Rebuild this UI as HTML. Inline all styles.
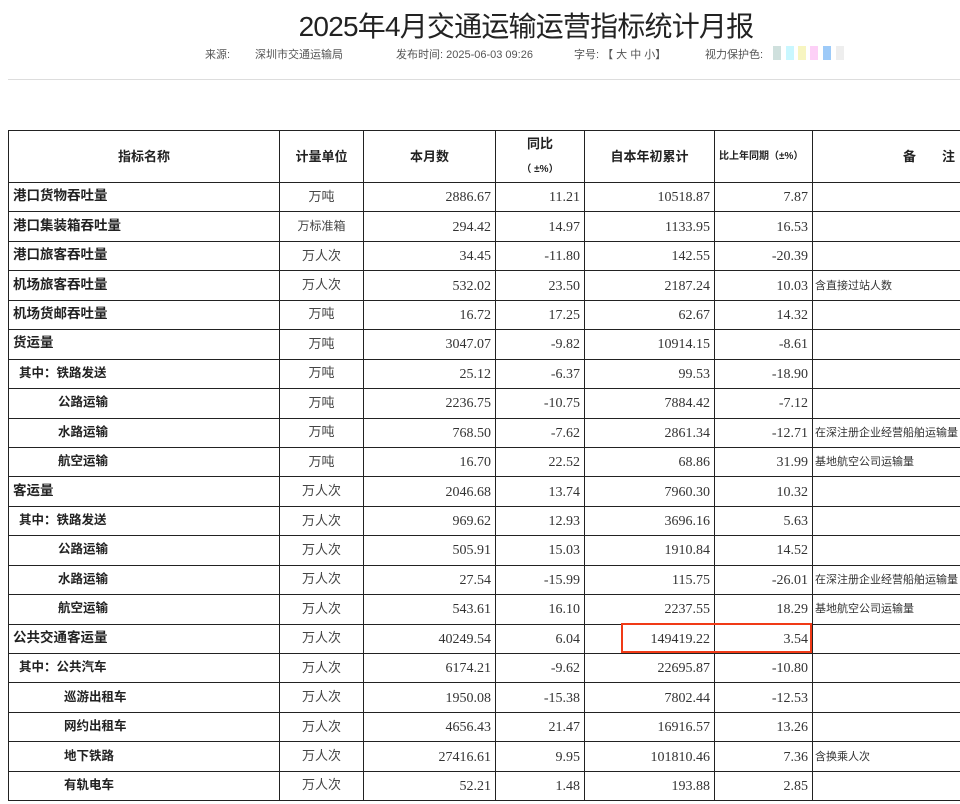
<!DOCTYPE html>
<html><head><meta charset="utf-8"><style>
body{margin:0;background:#fff;width:960px;height:804px;overflow:hidden;position:relative;font-family:"Liberation Sans","Noto Sans CJK SC",sans-serif;}
h1{position:absolute;top:5px;left:0;width:1052px;text-align:center;margin:0;font-weight:normal;font-size:28px;color:#222;letter-spacing:-0.8px;}
.meta{position:absolute;top:46px;font-size:11px;color:#555;white-space:nowrap}
.sw{position:absolute;top:46px;width:8px;height:14px}
.hr{position:absolute;top:79px;left:8px;width:952px;height:1px;background:#ddd}
table{position:absolute;left:8px;top:130px;border-collapse:collapse;table-layout:fixed;width:1000px}
td{border:1px solid #222;padding:0 4px;font-size:13px;color:#333;white-space:nowrap;overflow:hidden;vertical-align:middle;line-height:18px}
tr{height:29.45px}
tr.h{height:52px}
tr.h td{font-weight:bold;text-align:center;font-size:13px;color:#222}
td.n{font-weight:bold;color:#222;font-size:13.5px;padding-bottom:2px}
td.s1{padding-left:10px;font-size:12.5px}
td.s2{padding-left:49px;font-size:12.5px}
td.s3{padding-left:55px;font-size:12.5px}
td.u{text-align:center;color:#444;padding-bottom:1px}
td.v{text-align:right;font-family:"Liberation Serif",serif;font-size:14px;color:#333;padding-top:2px}
td.r{font-size:11px;color:#333;padding-left:2px}
.box{position:absolute;left:621px;top:623px;width:187px;height:26px;border:2px solid #f03a17}
</style></head><body>
<h1>2025年4月交通运输运营指标统计月报</h1>
<div class="meta" style="left:205px">来源:</div>
<div class="meta" style="left:255px">深圳市交通运输局</div>
<div class="meta" style="left:396px">发布时间: 2025-06-03 09:26</div>
<div class="meta" style="left:574px">字号: 【 大 中 小】</div>
<div class="meta" style="left:705px">视力保护色:</div>
<div class="sw" style="left:773px;background:#cfe0dd"></div>
<div class="sw" style="left:786px;background:#c9f7ff"></div>
<div class="sw" style="left:798px;background:#f7f5c0"></div>
<div class="sw" style="left:810px;background:#fdd0f7"></div>
<div class="sw" style="left:823px;background:#9dcaf8"></div>
<div class="sw" style="left:836px;background:#eee"></div>
<div class="hr"></div>
<table>
<colgroup><col style="width:271px"><col style="width:84px"><col style="width:132px"><col style="width:89px"><col style="width:130px"><col style="width:98px"><col style="width:196px"></colgroup>
<tr class="h"><td>指标名称</td><td>计量单位</td><td>本月数</td><td style="line-height:24px">同比<br><span style="font-size:10px">（ ±%）</span></td><td>自本年初累计</td><td style="font-size:10px;text-align:left">比上年同期（±%）</td><td style="text-align:left;padding-left:90px">备　　注</td></tr>
<tr><td class="n">港口货物吞吐量</td><td class="u">万吨</td><td class="v">2886.67</td><td class="v">11.21</td><td class="v">10518.87</td><td class="v">7.87</td><td class="r"></td></tr>
<tr><td class="n">港口集装箱吞吐量</td><td class="u" style="font-size:12px">万标准箱</td><td class="v">294.42</td><td class="v">14.97</td><td class="v">1133.95</td><td class="v">16.53</td><td class="r"></td></tr>
<tr><td class="n">港口旅客吞吐量</td><td class="u">万人次</td><td class="v">34.45</td><td class="v">-11.80</td><td class="v">142.55</td><td class="v">-20.39</td><td class="r"></td></tr>
<tr><td class="n">机场旅客吞吐量</td><td class="u">万人次</td><td class="v">532.02</td><td class="v">23.50</td><td class="v">2187.24</td><td class="v">10.03</td><td class="r">含直接过站人数</td></tr>
<tr><td class="n">机场货邮吞吐量</td><td class="u">万吨</td><td class="v">16.72</td><td class="v">17.25</td><td class="v">62.67</td><td class="v">14.32</td><td class="r"></td></tr>
<tr><td class="n">货运量</td><td class="u">万吨</td><td class="v">3047.07</td><td class="v">-9.82</td><td class="v">10914.15</td><td class="v">-8.61</td><td class="r"></td></tr>
<tr><td class="n s1">其中：铁路发送</td><td class="u">万吨</td><td class="v">25.12</td><td class="v">-6.37</td><td class="v">99.53</td><td class="v">-18.90</td><td class="r"></td></tr>
<tr><td class="n s2">公路运输</td><td class="u">万吨</td><td class="v">2236.75</td><td class="v">-10.75</td><td class="v">7884.42</td><td class="v">-7.12</td><td class="r"></td></tr>
<tr><td class="n s2">水路运输</td><td class="u">万吨</td><td class="v">768.50</td><td class="v">-7.62</td><td class="v">2861.34</td><td class="v">-12.71</td><td class="r">在深注册企业经营船舶运输量</td></tr>
<tr><td class="n s2">航空运输</td><td class="u">万吨</td><td class="v">16.70</td><td class="v">22.52</td><td class="v">68.86</td><td class="v">31.99</td><td class="r">基地航空公司运输量</td></tr>
<tr><td class="n">客运量</td><td class="u">万人次</td><td class="v">2046.68</td><td class="v">13.74</td><td class="v">7960.30</td><td class="v">10.32</td><td class="r"></td></tr>
<tr><td class="n s1">其中：铁路发送</td><td class="u">万人次</td><td class="v">969.62</td><td class="v">12.93</td><td class="v">3696.16</td><td class="v">5.63</td><td class="r"></td></tr>
<tr><td class="n s2">公路运输</td><td class="u">万人次</td><td class="v">505.91</td><td class="v">15.03</td><td class="v">1910.84</td><td class="v">14.52</td><td class="r"></td></tr>
<tr><td class="n s2">水路运输</td><td class="u">万人次</td><td class="v">27.54</td><td class="v">-15.99</td><td class="v">115.75</td><td class="v">-26.01</td><td class="r">在深注册企业经营船舶运输量</td></tr>
<tr><td class="n s2">航空运输</td><td class="u">万人次</td><td class="v">543.61</td><td class="v">16.10</td><td class="v">2237.55</td><td class="v">18.29</td><td class="r">基地航空公司运输量</td></tr>
<tr><td class="n">公共交通客运量</td><td class="u">万人次</td><td class="v">40249.54</td><td class="v">6.04</td><td class="v">149419.22</td><td class="v">3.54</td><td class="r"></td></tr>
<tr><td class="n s1">其中：公共汽车</td><td class="u">万人次</td><td class="v">6174.21</td><td class="v">-9.62</td><td class="v">22695.87</td><td class="v">-10.80</td><td class="r"></td></tr>
<tr><td class="n s3">巡游出租车</td><td class="u">万人次</td><td class="v">1950.08</td><td class="v">-15.38</td><td class="v">7802.44</td><td class="v">-12.53</td><td class="r"></td></tr>
<tr><td class="n s3">网约出租车</td><td class="u">万人次</td><td class="v">4656.43</td><td class="v">21.47</td><td class="v">16916.57</td><td class="v">13.26</td><td class="r"></td></tr>
<tr><td class="n s3">地下铁路</td><td class="u">万人次</td><td class="v">27416.61</td><td class="v">9.95</td><td class="v">101810.46</td><td class="v">7.36</td><td class="r">含换乘人次</td></tr>
<tr><td class="n s3">有轨电车</td><td class="u">万人次</td><td class="v">52.21</td><td class="v">1.48</td><td class="v">193.88</td><td class="v">2.85</td><td class="r"></td></tr>
</table>
<div class="box"></div>
</body></html>
